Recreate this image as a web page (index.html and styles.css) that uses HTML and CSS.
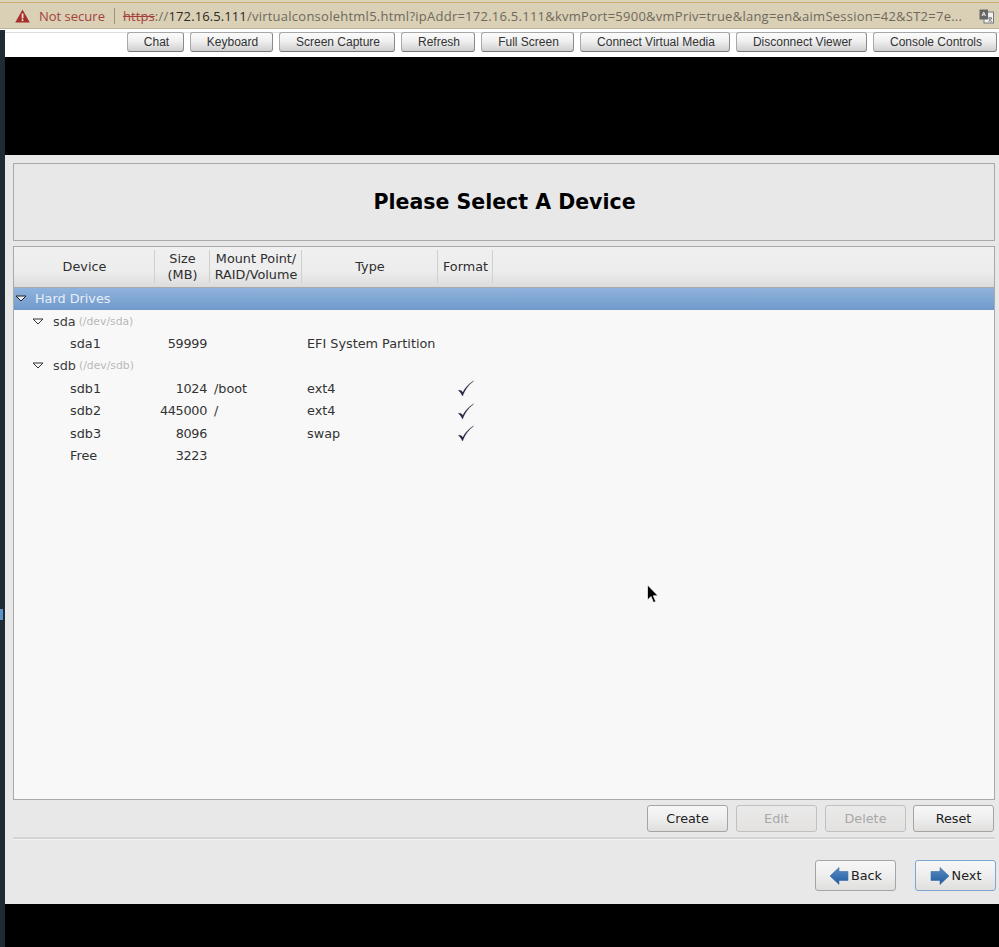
FILE: index.html
```html
<!DOCTYPE html>
<html lang="en">
<head>
    <meta charset="UTF-8">
    <meta name="viewport" content="width=device-width, initial-scale=1.0">
    <title>Virtual Console</title>
    <link rel="stylesheet" href="styles.css">
</head>

<body>
    <div class="urlbar">
        <svg class="warnIcon" width="15" height="14" viewBox="0 0 15 14">
            <path d="M7.5 0.5 L14.8 13.5 H0.2 Z" fill="#a52f2a"/>
            <rect x="6.7" y="4.5" width="1.7" height="5" fill="#f1e8d6"/>
            <rect x="6.7" y="10.3" width="1.7" height="1.8" fill="#f1e8d6"/>
        </svg>
        <span class="notSecure">Not secure</span>
        <span class="urlDivider"></span>
        <span class="url"><span class="scheme">https</span><span class="urlDim">://</span>172.16.5.111<span class="urlDim">/virtualconsolehtml5.html?ipAddr=172.16.5.111&amp;kvmPort=5900&amp;vmPriv=true&amp;lang=en&amp;aimSession=42&amp;ST2=7e...</span></span>
        <svg class="translateIcon" width="15" height="15" viewBox="0 0 15 15">
            <rect x="5" y="3" width="9.5" height="11" fill="#f2f2f2" stroke="#777"/>
            <rect x="0.5" y="0.5" width="8.5" height="10" fill="#666"/>
            <path d="M3 7 L4.7 3 L6.5 7 M3.6 5.8 H5.8" stroke="#eee" fill="none"/>
            <path d="M9 9 H13 M11 8 V9 M12.5 9 C12 11 10.5 12 9.5 12.5 M10 10 C10.5 11.5 12 12.3 13 12.5" stroke="#555" fill="none" stroke-width="0.8"/>
        </svg>
    </div>

    <div class="main">
        <div class="strip"><span class="stripMark"></span></div>
        <div class="console">
            <div class="toolbar">
                <button class="toolBtn btnChat">Chat</button>
                <button class="toolBtn btnKeyboard">Keyboard</button>
                <button class="toolBtn btnCapture">Screen Capture</button>
                <button class="toolBtn btnRefresh">Refresh</button>
                <button class="toolBtn btnFull">Full Screen</button>
                <button class="toolBtn btnMedia">Connect Virtual Media</button>
                <button class="toolBtn btnDisconnect">Disconnect Viewer</button>
                <button class="toolBtn btnControls">Console Controls</button>
            </div>

            <div class="blackBar topBlack"></div>

            <div class="installer">
                <div class="titleBox">Please Select A Device</div>

                <div class="deviceList">
                    <div class="listHead">
                        <div class="headCell">Device</div>
                        <div class="headCell">Size<br>(MB)</div>
                        <div class="headCell">Mount Point/<br>RAID/Volume</div>
                        <div class="headCell">Type</div>
                        <div class="headCell">Format</div>
                    </div>

                    <div class="groupRow">
                        <svg class="arrow" width="12" height="7" viewBox="0 0 12 7"><path d="M1 1 H11 L6 6 Z" fill="#dfe8f3" stroke="#222"/></svg>
                        <span>Hard Drives</span>
                    </div>

                    <div class="listBody">
                        <div class="diskRow">
                            <svg class="arrow" width="12" height="7" viewBox="0 0 12 7"><path d="M1 1 H11 L6 6 Z" fill="#f8f8f8" stroke="#333"/></svg>
                            <span class="diskName">sda</span><span class="diskPath">(/dev/sda)</span>
                        </div>
                        <div class="partRow">
                            <span class="partName">sda1</span><span class="partSize">59999</span><span class="partMount"></span><span class="partType">EFI System Partition</span>
                        </div>
                        <div class="diskRow">
                            <svg class="arrow" width="12" height="7" viewBox="0 0 12 7"><path d="M1 1 H11 L6 6 Z" fill="#f8f8f8" stroke="#333"/></svg>
                            <span class="diskName">sdb</span><span class="diskPath">(/dev/sdb)</span>
                        </div>
                        <div class="partRow">
                            <span class="partName">sdb1</span><span class="partSize">1024</span><span class="partMount">/boot</span><span class="partType">ext4</span>
                            <svg class="check" width="18" height="18" viewBox="0 0 18 18"><path d="M1.5 10.5 C3 11.5 4.5 13.5 5.5 16 C7.5 10.5 11 5 16.5 1 C11.5 4 8 8 5.8 12.5 C4.8 11 3.2 10 1.5 10.5 Z" fill="#20233f" stroke="#20233f" stroke-width="0.4"/></svg>
                        </div>
                        <div class="partRow">
                            <span class="partName">sdb2</span><span class="partSize">445000</span><span class="partMount">/</span><span class="partType">ext4</span>
                            <svg class="check" width="18" height="18" viewBox="0 0 18 18"><path d="M1.5 10.5 C3 11.5 4.5 13.5 5.5 16 C7.5 10.5 11 5 16.5 1 C11.5 4 8 8 5.8 12.5 C4.8 11 3.2 10 1.5 10.5 Z" fill="#20233f" stroke="#20233f" stroke-width="0.4"/></svg>
                        </div>
                        <div class="partRow">
                            <span class="partName">sdb3</span><span class="partSize">8096</span><span class="partMount"></span><span class="partType">swap</span>
                            <svg class="check" width="18" height="18" viewBox="0 0 18 18"><path d="M1.5 10.5 C3 11.5 4.5 13.5 5.5 16 C7.5 10.5 11 5 16.5 1 C11.5 4 8 8 5.8 12.5 C4.8 11 3.2 10 1.5 10.5 Z" fill="#20233f" stroke="#20233f" stroke-width="0.4"/></svg>
                        </div>
                        <div class="partRow">
                            <span class="partName">Free</span><span class="partSize">3223</span>
                        </div>
                    </div>
                </div>

                <div class="actionRow">
                    <button class="gtkBtn">Create</button>
                    <button class="gtkBtn" disabled>Edit</button>
                    <button class="gtkBtn" disabled>Delete</button>
                    <button class="gtkBtn btnReset">Reset</button>
                </div>

                <hr class="divider">

                <div class="navRow">
                    <button class="gtkBtn navBtn">
                        <svg width="20" height="22" viewBox="0 0 20 22">
                            <defs><linearGradient id="blueBack" x1="0" y1="0" x2="0" y2="1"><stop offset="0" stop-color="#5b8cc4"/><stop offset="1" stop-color="#1f5a9e"/></linearGradient></defs>
                            <path d="M1 11 L10 2.5 V6.5 H19 V15.5 H10 V19.5 Z" fill="url(#blueBack)" stroke="#3a6ea8" stroke-width="0.6"/>
                        </svg>
                        <span>Back</span>
                    </button>
                    <button class="gtkBtn navBtn navFocus">
                        <svg width="20" height="22" viewBox="0 0 20 22">
                            <defs><linearGradient id="blueNext" x1="0" y1="0" x2="0" y2="1"><stop offset="0" stop-color="#5b8cc4"/><stop offset="1" stop-color="#1f5a9e"/></linearGradient></defs>
                            <path d="M19 11 L10 2.5 V6.5 H1 V15.5 H10 V19.5 Z" fill="url(#blueNext)" stroke="#3a6ea8" stroke-width="0.6"/>
                        </svg>
                        <span>Next</span>
                    </button>
                </div>
            </div>

            <div class="blackBar bottomBlack"></div>
        </div>
    </div>

    <svg class="cursor" width="14" height="20" viewBox="0 0 14 20">
        <path d="M1.5 1 V16 L5 12.5 L7.5 18.5 L9.8 17.5 L7.3 11.8 H12 Z" fill="#000" stroke="#fff" stroke-width="0.7"/>
    </svg>
</body>
</html>
```

FILE: styles.css
```css
html, body {
    margin: 0;
    padding: 0;
    height: 947px;
    overflow: hidden;
    background-color: #fff;
}
body {
    position: relative;
}
button {
    margin: 0;
    padding: 0;
}

/* browser address bar */
.urlbar {
    height: 29px;
    display: flex;
    align-items: center;
    box-sizing: border-box;
    padding: 4px 0 0 15px;
    background: linear-gradient(#dcd3bb 2px, #c9ae70 2px, #c9ae70 3px, #d9d0b6 3px);
    border-bottom: 1px solid #bdb49c;
    font: 13px "Open Sans", "Noto Sans", sans-serif;
    white-space: nowrap;
}
.warnIcon {
    flex: none;
}
.notSecure {
    margin-left: 9px;
    color: #a5413a;
}
.urlDivider {
    width: 1px;
    height: 16px;
    margin: 0 8px 0 9px;
    background-color: #9c927a;
}
.url {
    color: #2d2a22;
    width: 839px;
    letter-spacing: 0.1px;
}
.urlDim {
    color: #6f6a5c;
    letter-spacing: 0.25px;
}
.scheme {
    color: #a5413a;
    text-decoration: line-through;
}
.translateIcon {
    margin-left: 17px;
    flex: none;
}

.main {
    display: flex;
    height: 918px;
}
.strip {
    width: 5px;
    flex: none;
    margin-top: 1px;
    background-color: #1f2a35;
}
.stripMark {
    display: block;
    width: 3px;
    height: 11px;
    margin-top: 579px;
    background-color: #5d93c4;
}
.console {
    flex: 1;
    display: flex;
    flex-direction: column;
    min-width: 0;
}

/* console toolbar */
.toolbar {
    height: 28px;
    display: flex;
    gap: 6px;
    box-sizing: border-box;
    padding: 3px 0 0 122px;
    background: linear-gradient(#fff 3px, #dddddd 3px, #dddddd 4px, #fff 4px);
}
.toolBtn {
    height: 20px;
    box-sizing: border-box;
    padding-left: 2px;
    border: 1px solid #a8a8a8;
    border-bottom-color: #777;
    border-right-color: #8a8a8a;
    border-radius: 3px;
    background: linear-gradient(#fbfbfb, #f0f0f0 45%, #cfcfcf);
    font: 12px "Liberation Sans", Arial, sans-serif;
    color: #333;
}
.btnChat { width: 57px; }
.btnKeyboard { width: 83px; }
.btnCapture { width: 116px; }
.btnRefresh { width: 74px; }
.btnFull { width: 93px; }
.btnMedia { width: 150px; }
.btnDisconnect { width: 131px; }
.btnControls { width: 124px; }

.blackBar {
    background-color: #000;
}
.topBlack {
    height: 98px;
}
.bottomBlack {
    height: 43px;
}

/* installer screen */
.installer {
    height: 749px;
    box-sizing: border-box;
    padding: 8px 4px 0 8px;
    background-color: #e8e8e8;
    font: 12.8px "DejaVu Sans", sans-serif;
    color: #2e2e2e;
}
.titleBox {
    height: 78px;
    box-sizing: border-box;
    padding: 0 0 1px 1px;
    border: 1px solid #a9a9a9;
    display: flex;
    align-items: center;
    justify-content: center;
    font: bold 20.5px "DejaVu Sans", sans-serif;
    color: #000;
}
.deviceList {
    height: 554px;
    margin-top: 5px;
    box-sizing: border-box;
    border: 1px solid #a9a9a9;
    background-color: #f8f8f8;
}
.listHead {
    height: 41px;
    display: grid;
    grid-template-columns: 141px 55px 92px 136px 55px;
    box-sizing: border-box;
    padding-bottom: 1px;
    border-bottom: 1px solid #a9a9a9;
    background: linear-gradient(#f0f0f0, #ededed 60%, #dcdcdc);
}
.headCell {
    display: flex;
    align-items: center;
    justify-content: center;
    text-align: center;
    margin: 3px 0 3px;
    padding-left: 1px;
    line-height: 16px;
    border-right: 1px solid #cfcfcf;
}
.groupRow {
    height: 22px;
    display: flex;
    align-items: center;
    padding: 0 0 2px 1px;
    box-sizing: border-box;
    gap: 8px;
    background: linear-gradient(#8fb3dc, #7099cb);
    color: #e6eef8;
}
.arrow {
    flex: none;
}
.diskRow {
    height: 22.4px;
    display: flex;
    align-items: center;
    padding-left: 18px;
    color: #3c3c3c;
}
.diskName {
    margin-left: 9px;
}
.diskPath {
    margin-left: 3px;
    font-size: 10.8px;
    color: #b8b8b8;
}
.partRow {
    height: 22.4px;
    display: grid;
    grid-template-columns: 56px 81px 100px 133px 18px;
    align-items: center;
    padding-left: 56px;
    color: #333;
}
.partSize {
    text-align: right;
    letter-spacing: -0.3px;
}
.partMount {
    padding-left: 7px;
}
.partType {
    white-space: nowrap;
}
.check {
    margin: 2px 0 0 17px;
}

.actionRow {
    display: flex;
    justify-content: flex-end;
    gap: 8px;
    height: 27px;
    margin-top: 5px;
    padding-right: 1px;
}
.gtkBtn {
    width: 81px;
    height: 27px;
    box-sizing: border-box;
    border: 1px solid #a5a5a5;
    border-radius: 3px;
    background: linear-gradient(#f7f7f7, #eeeeee 50%, #e0dfdd);
    font: 12.8px "DejaVu Sans", sans-serif;
    color: #222;
}
.gtkBtn:disabled {
    border-color: #c0c0c0;
    background: linear-gradient(#eaeaea, #e4e2e0);
    color: #a8a8a8;
}
.btnReset {
    margin-left: -1px;
}
.divider {
    height: 0;
    margin: 5px 0 0 0;
    border: 0;
    border-top: 2px solid #d4d4d2;
    border-bottom: 1px solid #f2f2f2;
}
.navRow {
    display: flex;
    justify-content: flex-end;
    gap: 19px;
    margin-top: 20px;
    margin-right: -1px;
}
.navBtn {
    height: 31px;
    display: flex;
    align-items: center;
    justify-content: center;
    gap: 2px;
}
.navFocus {
    border-color: #7ea6d2;
}

/* mouse pointer over the console */
.cursor {
    position: absolute;
    left: 646px;
    top: 584px;
}
```
